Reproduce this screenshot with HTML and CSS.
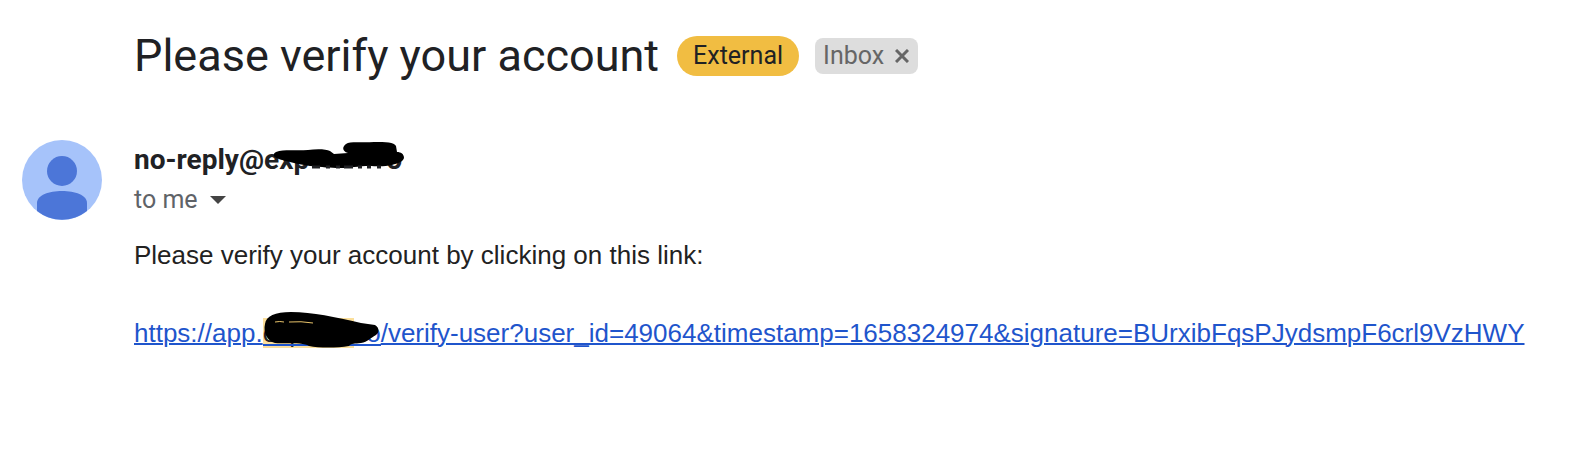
FILE: index.html
```html
<!DOCTYPE html>
<html lang="en">
<head>
  <meta charset="UTF-8">
  <title>Please verify your account</title>
  <meta name="viewport" content="width=device-width, initial-scale=1.0">
  <link rel="stylesheet" href="styles.css">
</head>
<body>
  <div class="subject-row">
    <h1 class="subject">Please verify your account</h1>
    <span class="external">External</span>
    <span class="label">Inbox
      <button class="label-remove" type="button" aria-label="Remove label Inbox">
        <svg width="14" height="14" viewBox="0 0 14 14"><path d="M1 1L13 13M13 1L1 13" stroke="#666" stroke-width="3"/></svg>
      </button>
    </span>
  </div>

  <div class="message">
    <svg class="avatar" width="80" height="80" viewBox="0 0 80 80">
      <circle cx="40" cy="40" r="40" fill="#a6c3fa"/>
      <circle cx="40" cy="31" r="15" fill="#4c76d8"/>
      <path d="M15 71V63C15 55 27 51 40 51S65 55 65 63V71A40 40 0 0 1 15 71Z" fill="#4c76d8"/>
    </svg>

    <div class="content">
      <div class="sender">no-reply@<span class="redacted sender-domain"><span>exp</span><span>o</span>
        <svg class="scribble" width="140" height="30" viewBox="0 0 140 30">
          <path d="M12 10C20 7 32 9 44 8C52 7 62 7 66 9L70 12L84 11C78 9 78 5 82 2C86 -1 98 1 110 0C122 0 130 0 132 4L133 10C137 10 140 12 140 16C139 20 134 21 128 23C120 25 110 24 106 24C94 24 86 26 76 26C66 26 58 25 46 24C38 23 30 21 22 19C12 17 6 14 12 10Z"/>
          <path d="M48 25H56M62 25H66M72 25H76M80 25H89M94 25H98M103 25H107M113 25H117" stroke="#202124" stroke-width="3"/>
        </svg></span>
      </div>
      <button class="recipient" type="button">to me
        <svg width="16" height="8" viewBox="0 0 16 8"><path d="M0 0H16L8 8Z" fill="#444"/></svg>
      </button>

      <div class="body">
        <p>Please verify your account by clicking on this link:</p>
        <p><a href="#">https://app.<span class="redacted link-domain"><span class="found">e<span>p</span></span><span>o</span><svg class="scribble" width="118" height="36" viewBox="0 0 118 36">
            <path d="M0 33H118" stroke="#1f55cc" stroke-width="2"/>
            <path d="M2 12C3 4 12 0 28 0C50 0 72 5 98 11L112 13C117 16 116 21 113 23C107 26 105 30 98 31C92 32 88 31 86 34C74 36 56 36 46 34C40 30 22 32 12 31C4 29 0 20 2 12Z"/>
            <path d="M12 10Q17 9 21 10M26 10Q38 9 50 11" fill="none" stroke="#e8c36a"/>
          </svg></span>/verify-user?user_id=49064&amp;timestamp=1658324974&amp;signature=BUrxibFqsPJydsmpF6crl9VzHWY</a></p>
      </div>
    </div>
  </div>
</body>
</html>
```

FILE: styles.css
```css
body {
  margin: 0;
  padding: 32px 22px;
  background-color: #fff;
  color: #202124;
  font-family: Roboto, "Liberation Sans", sans-serif;
}
button {
  border: 0;
  padding: 0;
  background: none;
  font: inherit;
  cursor: pointer;
}
.subject-row {
  display: flex;
  align-items: center;
  gap: 16px;
  padding-left: 112px;
}
.subject {
  margin: 0 2px 0 0;
  font-size: 45px;
  font-weight: 400;
  line-height: 48px;
}
.external {
  padding: 0 16px;
  border-radius: 20px;
  background-color: #f1bd42;
  font-size: 25px;
  line-height: 40px;
}
.label {
  display: flex;
  align-items: center;
  gap: 11px;
  padding: 0 9px 0 8px;
  border-radius: 8px;
  background-color: #ddd;
  color: #666;
  font-size: 25px;
  line-height: 36px;
}
.label-remove {
  display: flex;
}
.message {
  display: flex;
  align-items: flex-start;
  gap: 32px;
  margin-top: 60px;
}
.avatar {
  flex: none;
}
.content {
  flex: 1;
  min-width: 0;
}
.sender {
  font-size: 28px;
  font-weight: 700;
  line-height: 40px;
  white-space: nowrap;
}
.recipient {
  display: flex;
  align-items: center;
  gap: 12px;
  color: #5f6368;
  font-size: 25px;
  line-height: 40px;
}
.body {
  margin-top: 16px;
  font-family: "Liberation Sans", Arial, sans-serif;
  font-size: 26px;
  line-height: 39px;
  color: #222;
}
.body p {
  margin: 0 0 39px;
}
.body a {
  color: #1f55cc;
  text-decoration-thickness: 2px;
  white-space: nowrap;
}
.redacted {
  position: relative;
  display: inline-flex;
  align-items: baseline;
  justify-content: space-between;
}
.sender-domain {
  width: 138px;
}
.link-domain {
  width: 118px;
}
.found {
  display: inline-flex;
  gap: 12px;
  width: 91px;
  height: 30px;
  line-height: 30px;
  background-color: #fbdf9b;
  color: #222;
}
/* marker strokes drawn over the text */
.scribble {
  position: absolute;
  left: 0;
  bottom: 8px;
}
.link-domain .scribble {
  bottom: 5px;
}
```
